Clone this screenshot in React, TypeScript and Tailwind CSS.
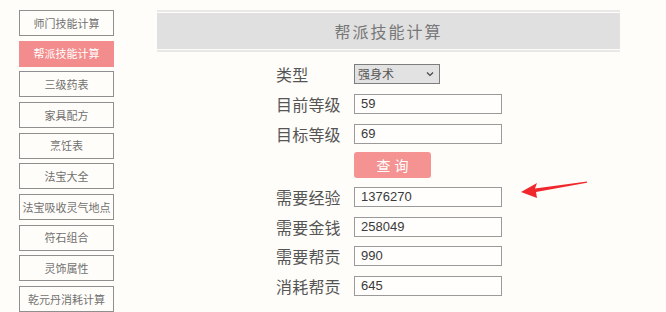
import React from "react";

const menu = [
  "师门技能计算",
  "帮派技能计算",
  "三级药表",
  "家具配方",
  "烹饪表",
  "法宝大全",
  "法宝吸收灵气地点",
  "符石组合",
  "灵饰属性",
  "乾元丹消耗计算",
];

function Field({ label, value }: { label: string; value: string }) {
  return (
    <div className="flex items-center h-[20px]">
      <div className="w-[78px] text-[16px] leading-none text-[#555] tracking-[0.2px]">{label}</div>
      <div
        className="w-[148px] h-[20px] border border-[#9a9a9a] bg-[#fffefc] pl-[6px] flex items-center text-[13px] text-[#3a3a3a]"
        style={{ fontFamily: '"Liberation Sans", Arial, sans-serif' }}
      >
        {value}
      </div>
    </div>
  );
}

export default function App() {
  return (
    <div
      className="relative w-[666px] h-[312px] overflow-hidden bg-[#fffdf9] flex pl-[19px] pt-[10px]"
      style={{ fontFamily: '"Noto Sans CJK SC", "Noto Sans", sans-serif' }}
    >
      <div className="w-[95px] flex flex-col gap-[4.67px]">
        {menu.map((m, i) => (
          <div
            key={m}
            className={
              i === 1
                ? "h-[26px] flex items-center justify-center bg-[#f38d8d] text-white text-[11px] border border-[#f38d8d]"
                : "h-[26px] flex items-center justify-center border border-[#8f8f8f] text-[#707070] text-[11px] bg-[#fffdf9]"
            }
          >
            {m}
          </div>
        ))}
      </div>

      <div className="ml-[43px] w-[463px] flex flex-col">
        <div className="border-y-2 border-[#e8e8e8] py-px">
          <div className="h-[36px] bg-[#e0e0e0] flex items-center justify-center text-[16px] tracking-[2px] text-[#777]">
            帮派技能计算
          </div>
        </div>

        <div className="ml-[119px] mt-[12px] flex flex-col gap-[10px]">
          <div className="flex items-center h-[20px]">
            <div className="w-[78px] text-[16px] leading-none text-[#555] tracking-[0.2px]">类型</div>
            <div className="w-[86px] h-[20px] border border-[#7d7d7d] bg-[#e2e2e2] flex items-center justify-between pl-[3px] pr-[5px] text-[12px] text-[#555]">
              <span>强身术</span>
              <svg width="8" height="6" viewBox="0 0 8 6">
                <path d="M1 1.5 L4 4.5 L7 1.5" fill="none" stroke="#444" strokeWidth="1.2" />
              </svg>
            </div>
          </div>
          <Field label="目前等级" value="59" />
          <Field label="目标等级" value="69" />
          <div className="flex -mt-[2px]">
            <div className="ml-[78px] w-[77px] h-[26px] rounded-[3px] bg-[#f59393] text-white text-[14px] tracking-[4px] flex items-center justify-center pl-[4px]">
              查询
            </div>
          </div>
          <div className="flex flex-col gap-[9.5px] -mt-[1px]">
            <Field label="需要经验" value="1376270" />
            <Field label="需要金钱" value="258049" />
            <Field label="需要帮贡" value="990" />
            <Field label="消耗帮贡" value="645" />
          </div>
        </div>
      </div>

      <svg className="absolute left-[515px] top-[178px]" width="80" height="25" viewBox="0 0 80 25">
        <path d="M6 14 L22 5 L20 10.5 L72 3.5 L72 4.8 L21 14 L22 20 Z" fill="#f0282d" />
      </svg>
    </div>
  );
}
